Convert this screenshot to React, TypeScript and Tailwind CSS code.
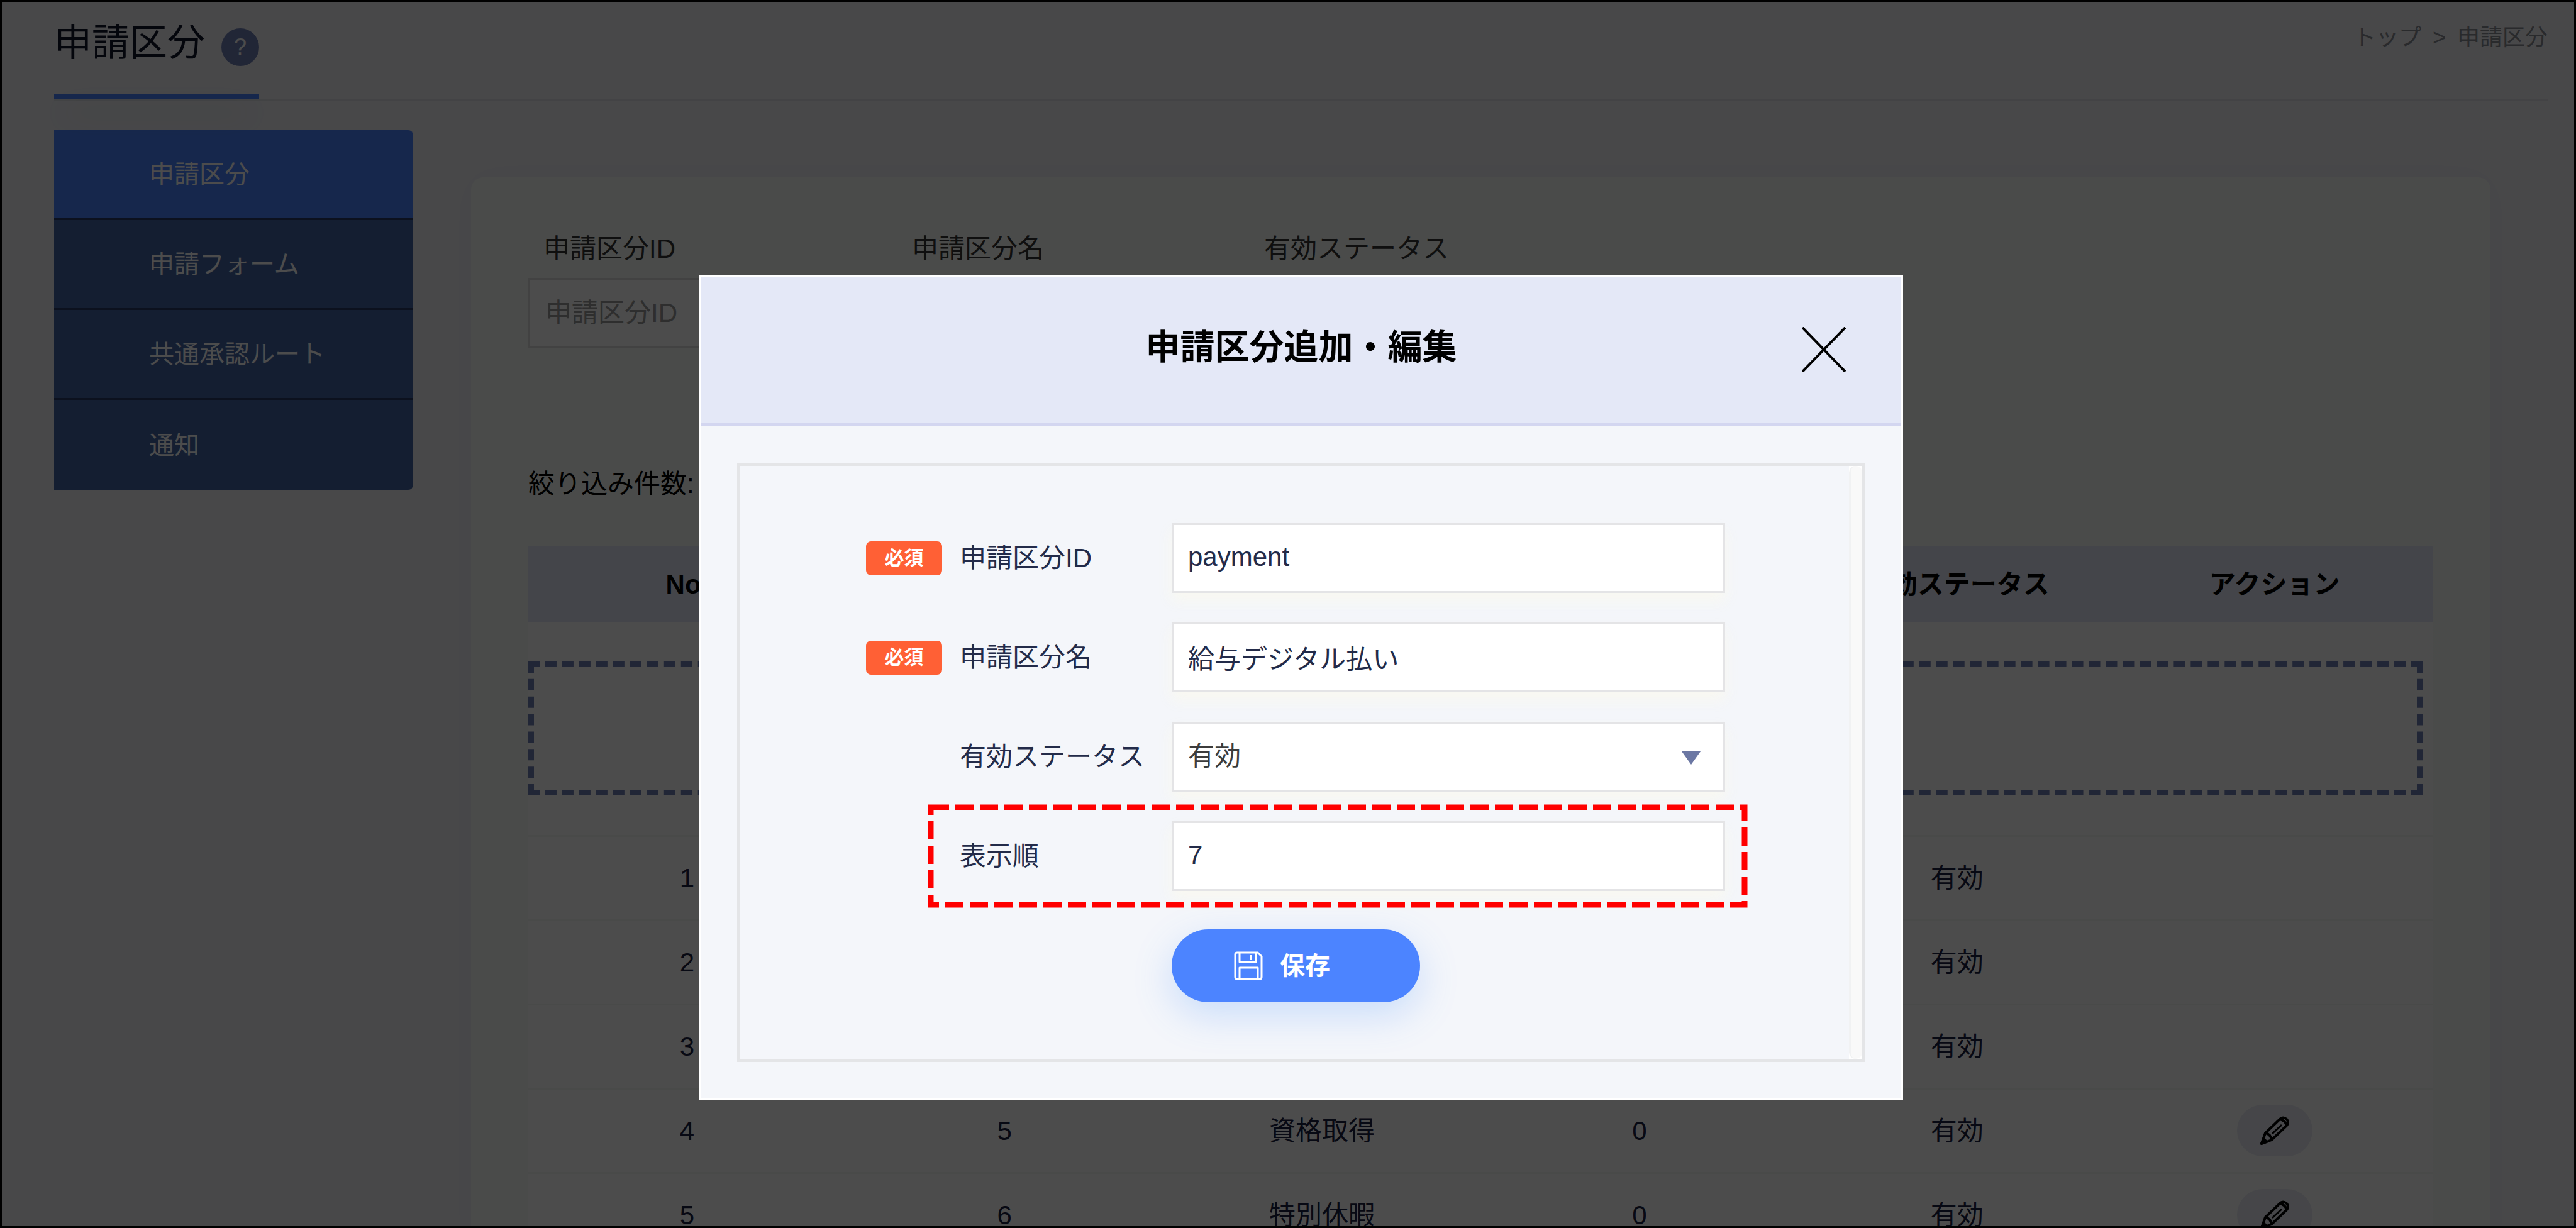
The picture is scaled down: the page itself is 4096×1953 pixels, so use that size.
import { useId, type ReactNode } from 'react'

const navItems = ['申請区分', '申請フォーム', '共通承認ルート', '通知']

const filters = [
    { label: '申請区分ID', width: 'w-[586px]' },
    { label: '申請区分名', width: 'w-[560px]' },
    { label: '有効ステータス', width: 'w-[560px]' },
]

const columns = ['No.', '申請区分ID', '申請区分名', '表示順', '有効ステータス', 'アクション']

const rows = [
    { no: 1, id: '1', name: '休暇', order: 0, status: '有効', editable: false },
    { no: 2, id: '2', name: '残業', order: 0, status: '有効', editable: false },
    { no: 3, id: '4', name: '勤怠', order: 0, status: '有効', editable: false },
    { no: 4, id: '5', name: '資格取得', order: 0, status: '有効', editable: true },
    { no: 5, id: '6', name: '特別休暇', order: 0, status: '有効', editable: true },
]

function PencilIcon() {
    return (
        <svg viewBox="0 0 46 46" className="size-[46px]" fill="none" stroke="black" strokeWidth="4" strokeLinejoin="round">
            <path d="M2 44 L8 27 L31 5 Q36 0 42 5 Q46 10 42 15 L18 38 Z" />
            <path d="M8 27 Q16 28 18 38 M31 5 Q40 7 42 15" />
            <path d="M19 28 L34 14" strokeWidth="3" />
            <path d="M2 44 L5 36 L10 41 Z" fill="black" />
        </svg>
    )
}

function SaveIcon() {
    return (
        <svg viewBox="0 0 46 46" className="size-[46px]" fill="none" stroke="white" strokeWidth="3" strokeLinejoin="round">
            <path d="M5 2 H38 L44 8 V41 Q44 44 41 44 H5 Q2 44 2 41 V5 Q2 2 5 2 Z" />
            <path d="M9 3 V17 H35 V3 M27 6 V13 M9 43 V26 H38 V43" />
        </svg>
    )
}

function Header() {
    return (
        <header className="flex items-start justify-between border-b-[3px] border-[#e0e2e6]">
            <div className="relative z-10">
                <div className="flex h-[149px] items-center gap-[26px]">
                    <h1 className="pb-[12px] text-[60px] leading-none text-[#10142a]">申請区分</h1>
                    <button type="button" className="size-[60px] rounded-full bg-[#717fb4] text-[36px] leading-none text-white">
                        ?
                    </button>
                </div>
                <div className="h-[9px] bg-[#4c84ff] shadow-[0_26px_60px_rgba(95,118,140,0.3)]" />
            </div>
            <nav className="flex gap-[18px] pt-[38px] text-[36px] leading-[44px] text-[#8a8c94]">
                <a href="#top">トップ</a>
                <span>&gt;</span>
                <span>申請区分</span>
            </nav>
        </header>
    )
}

function Sidebar() {
    return (
        <nav className="w-[571px] shrink-0 self-start overflow-hidden rounded-r-[8px] text-[40px] text-white">
            {navItems.map((item, i) => (
                <a
                    key={item}
                    href="#"
                    className={`flex h-[143px] items-center border-b-[3px] border-[#2a3a66] pl-[151px] last:border-b-0 ${i === 0 ? 'bg-[#4c84ff]' : 'bg-[#4364a6]'}`}
                >
                    {item}
                </a>
            ))}
        </nav>
    )
}

function RequestTable() {
    return (
        <table className="w-full table-fixed bg-white text-center text-[42px] text-[#1a2040]">
            <thead>
                <tr className="h-[120px] bg-[#e4e8f7] text-black">
                    {columns.map((column) => (
                        <th key={column} className="font-bold">{column}</th>
                    ))}
                </tr>
            </thead>
            <tbody>
                <tr className="h-[340px] border-b-[3px] border-[#f5f9f6]">
                    <td colSpan={6} className="pr-[17px]">
                        <div className="h-[213px] border-[9px] border-dashed border-[#717fb4]" />
                    </td>
                </tr>
                {rows.map((row) => (
                    <tr key={row.no} className="h-[134px] border-b-[3px] border-[#f5f9f6]">
                        <td>{row.no}</td>
                        <td>{row.id}</td>
                        <td>{row.name}</td>
                        <td>{row.order}</td>
                        <td>{row.status}</td>
                        <td>
                            {row.editable && (
                                <button type="button" aria-label="編集" className="inline-flex h-[82px] w-[120px] items-center justify-center rounded-full bg-[#e9ecf3] align-middle">
                                    <PencilIcon />
                                </button>
                            )}
                        </td>
                    </tr>
                ))}
            </tbody>
        </table>
    )
}

function ListCard() {
    return (
        <main className="mt-[75px] mr-[91px] ml-[92px] flex-1 rounded-[20px] bg-[#f8fcf8] px-[91px] pt-[84px] shadow-[0_0_60px_rgba(90,90,150,0.06)]">
            <div className="flex">
                {filters.map((filter) => (
                    <label key={filter.label} className={`${filter.width} text-[42px] leading-[60px] text-[#333333]`}>
                        <span className="block pl-[24px]">{filter.label}</span>
                        <input
                            placeholder={filter.label}
                            className="mt-[16px] h-[111px] w-[460px] border-[3px] border-[#dddddd] bg-white px-[24px] placeholder:text-[#999999]"
                        />
                    </label>
                ))}
            </div>
            <p className="mt-[187px] mb-[69px] text-[42px] leading-[60px] text-black">絞り込み件数: 5件</p>
            <RequestTable />
        </main>
    )
}

type FieldProps = {
    label: string
    required?: boolean
    highlighted?: boolean
    children: (id: string) => ReactNode
}

function Field({ label, required, highlighted, children }: FieldProps) {
    const id = useId()
    return (
        <div className="flex items-center">
            <div className="w-[149px] shrink-0">
                {required && (
                    <span className="flex h-[54px] w-[121px] items-center justify-center rounded-[8px] bg-[#ff6035] text-[31px] leading-none font-bold text-white">
                        必須
                    </span>
                )}
            </div>
            <div className="relative flex flex-1 items-center">
                <label htmlFor={id} className="w-[337px] shrink-0">{label}</label>
                <div className="relative flex-1">{children(id)}</div>
                {highlighted && (
                    <svg className="pointer-events-none absolute -inset-y-[22px] -left-[46px] h-[155px] w-[calc(100%+77px)] overflow-visible">
                        <rect width="100%" height="100%" fill="none" stroke="#ff0000" strokeWidth="9" strokeDasharray="29 10" />
                    </svg>
                )}
            </div>
        </div>
    )
}

const control = 'block h-[111px] w-full appearance-none border-[3px] border-[#e4e4e6] bg-white px-[23px] pb-[3px] shadow-[0_12px_20px_rgba(250,248,240,0.9)] outline-none'

function EditDialog() {
    return (
        <div role="dialog" aria-labelledby="dialog-title" className="w-[1914px] border-[3px] border-white bg-[#f4f6fa]">
            <div className="relative flex h-[237px] items-center justify-center border-b-[5px] border-[#d3d6f0] bg-[#e4e8f7]">
                <h2 id="dialog-title" className="pb-[8px] text-[55px] font-bold text-black">申請区分追加・編集</h2>
                <button type="button" aria-label="閉じる" className="absolute top-[80px] right-[88px]">
                    <svg viewBox="0 0 70 72" className="h-[72px] w-[70px]" stroke="black" strokeWidth="4">
                        <path d="M1 1 L69 71 M69 1 L1 71" />
                    </svg>
                </button>
            </div>
            <div className="p-[57px] pt-[59px]">
                <div className="flex border-[5px] border-[#e4e5e7]">
                    <form className="flex flex-1 flex-col gap-[47px] pt-[91px] pr-[197px] pb-[90px] pl-[200px] text-[42px] text-[#232b49]">
                        <Field label="申請区分ID" required>
                            {(id) => <input id={id} defaultValue="payment" className={control} />}
                        </Field>
                        <Field label="申請区分名" required>
                            {(id) => <input id={id} defaultValue="給与デジタル払い" className={control} />}
                        </Field>
                        <Field label="有効ステータス">
                            {(id) => (
                                <>
                                    <select id={id} className={`${control} text-[#3c3c3c]`}>
                                        <option>有効</option>
                                        <option>無効</option>
                                    </select>
                                    <svg viewBox="0 0 30 21" className="pointer-events-none absolute top-[47px] right-[39px] h-[21px] w-[30px]">
                                        <path d="M0 0 H30 L15 21 Z" fill="#6b77a3" />
                                    </svg>
                                </>
                            )}
                        </Field>
                        <Field label="表示順" highlighted>
                            {(id) => <input id={id} defaultValue="7" className={control} />}
                        </Field>
                        <button
                            type="button"
                            className="mt-[14px] ml-[486px] flex h-[116px] w-[395px] items-center gap-[27px] rounded-full bg-[#4c84ff] pl-[99px] text-[40px] font-bold text-white shadow-[0_20px_60px_rgba(76,148,255,0.25)]"
                        >
                            <SaveIcon />
                            保存
                        </button>
                    </form>
                    <div className="w-[21px] bg-white">
                        <div className="h-full rounded-full border-l-[3px] border-[#f1f2f3] bg-[#f9f9f9]" />
                    </div>
                </div>
            </div>
        </div>
    )
}

export default function App() {
    return (
        <div className="relative h-screen overflow-hidden bg-[#f2f2f6] font-['Liberation_Sans','Noto_Sans_CJK_JP',sans-serif]">
            <div className="pr-[45px] pl-[86px]">
                <Header />
                <div className="flex pt-[46px]">
                    <Sidebar />
                    <ListCard />
                </div>
            </div>
            <div className="absolute inset-0 z-20 flex items-start justify-center border-[3px] border-black bg-black/70 pt-[434px] pl-[42px]">
                <EditDialog />
            </div>
        </div>
    )
}
